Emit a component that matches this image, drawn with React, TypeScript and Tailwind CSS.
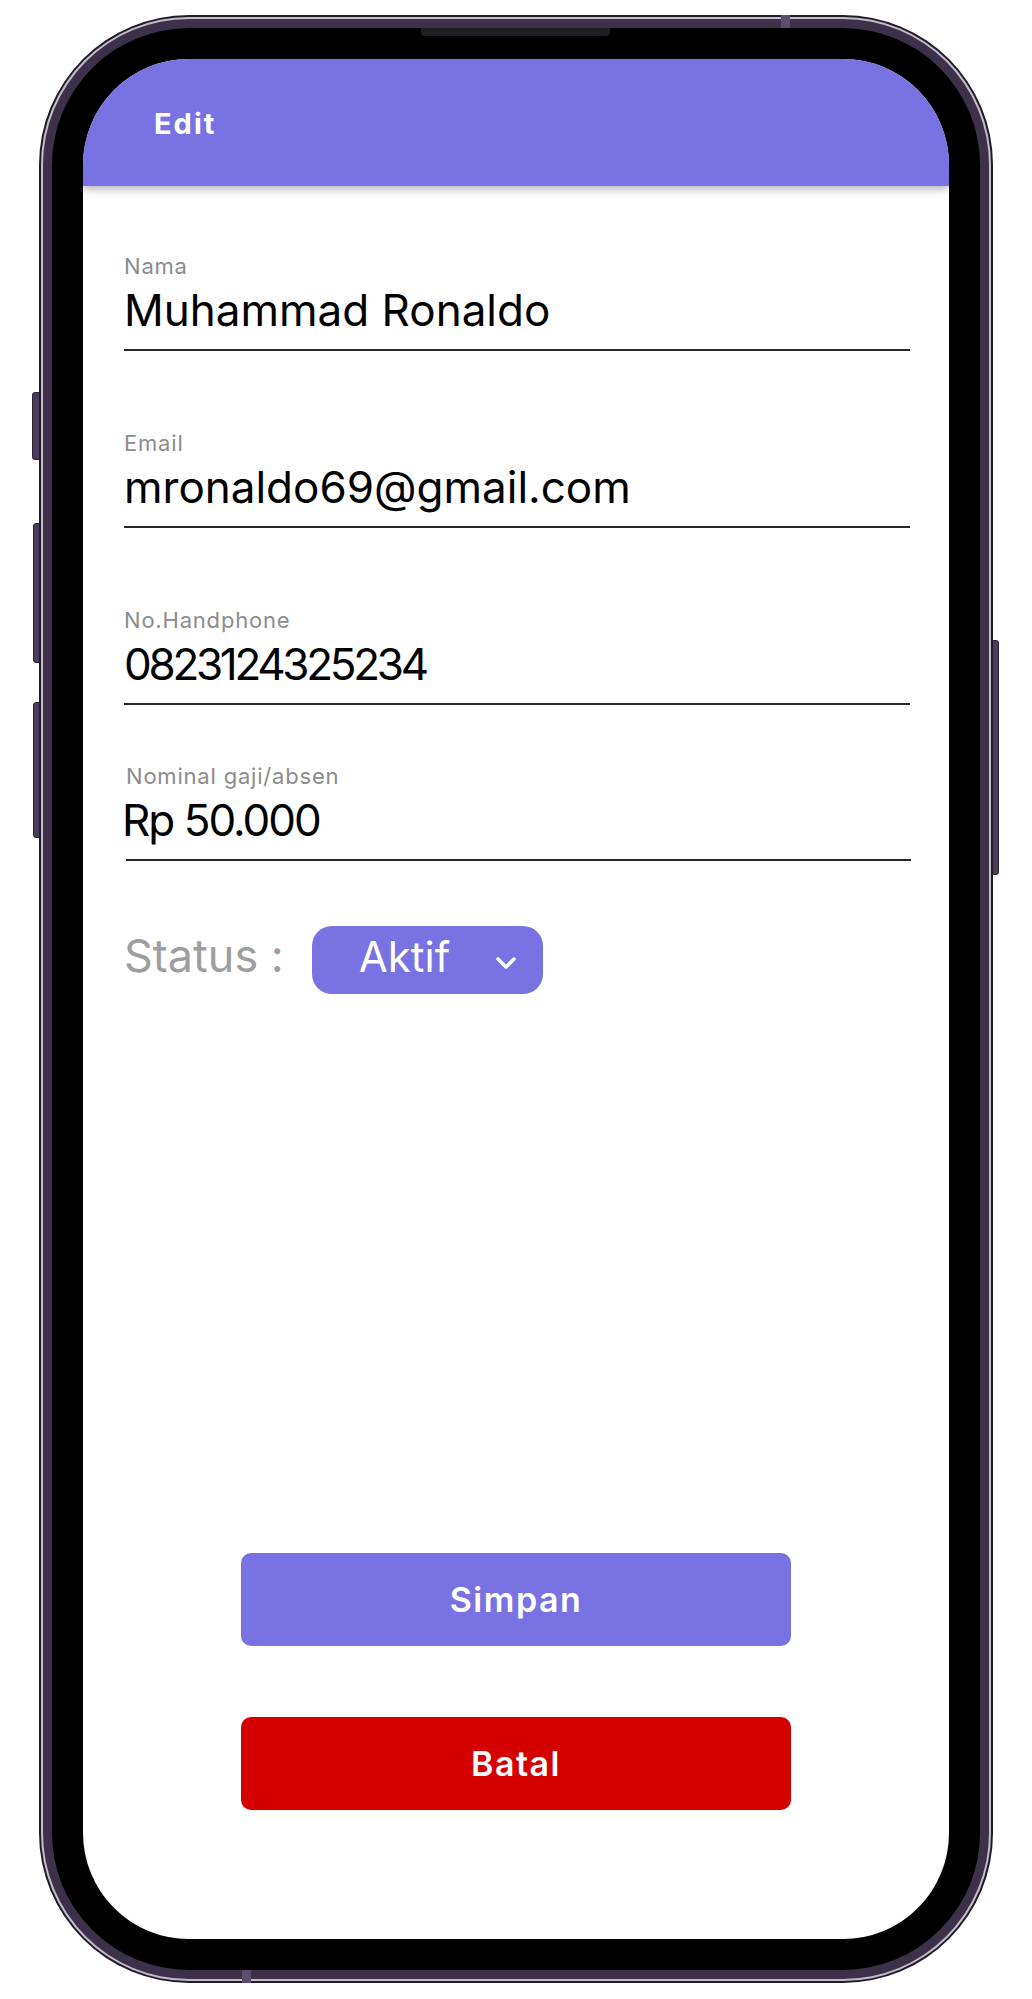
import React from "react";

const font = { fontFamily: "Inter, 'Noto Sans', sans-serif" };

type FieldProps = {
  label: string;
  value: string;
  valueClass?: string;
  shift?: boolean;
};

const Field = ({ label, value, valueClass = "", shift = false }: FieldProps) => (
  <div className={shift ? "ml-[2px] -mr-[1px]" : ""}>
    <div className="text-[22px] leading-[24px] tracking-[0.8px] text-[#8c8c8c]">
      {label}
    </div>
    <div
      className={`mt-[8px] text-[44px] leading-[48px] text-black whitespace-nowrap ${valueClass}`}
    >
      {value}
    </div>
    <div className="mt-[15px] h-[2px] bg-[#262626]" />
  </div>
);

const App = () => {
  return (
    <div className="w-[1032px] h-[1999px] bg-white pt-[15px] pl-[39px]" style={font}>
      {/* phone */}
      <div className="relative w-[954px] h-[1968px]">
        {/* side buttons */}
        <div className="absolute left-[-7px] top-[377px] w-[12px] h-[68px] rounded-[3px] border border-[#2a2236] bg-[#4a3d5c]" />
        <div className="absolute left-[-6px] top-[508px] w-[12px] h-[140px] rounded-[3px] border border-[#2a2236] bg-[#4a3d5c]" />
        <div className="absolute left-[-6px] top-[687px] w-[12px] h-[136px] rounded-[3px] border border-[#2a2236] bg-[#4a3d5c]" />
        <div className="absolute left-[948px] top-[625px] w-[12px] h-[235px] rounded-[3px] border border-[#2a2236] bg-[#4a3d5c]" />

        <div className="relative z-10 h-full rounded-[150px] bg-[#221a2b] p-[2px]">
          <div className="h-full rounded-[148px] bg-[#c4bdc5] p-[2px]">
            <div className="h-full rounded-[146px] bg-[#3d3149] p-[9px]">
              <div className="h-full rounded-[137px] bg-black p-[31px]">
                {/* screen */}
                <div className="h-full rounded-[106px] bg-white overflow-hidden flex flex-col">
                  <div className="relative z-10 h-[127px] shrink-0 bg-[#7872e3] flex items-center pl-[71px] pt-[3px] shadow-[0_3px_8px_rgba(0,0,0,0.3)]">
                    <span className="text-white text-[29px] font-bold tracking-[2px]">Edit</span>
                  </div>

                  <div className="pl-[41px] pr-[39px] pt-[68px]">
                    <div className="flex flex-col gap-[80px]">
                      <Field label="Nama" value="Muhammad Ronaldo" />
                      <Field label="Email" value="mronaldo69@gmail.com" />
                      <Field
                        label="No.Handphone"
                        value="0823124325234"
                        valueClass="tracking-[-3.3px]"
                      />
                    </div>
                    <div className="mt-[59px]">
                      <Field
                        label="Nominal gaji/absen"
                        value="Rp 50.000"
                        valueClass="-ml-[4px] tracking-[-2px]"
                        shift
                      />
                    </div>

                    {/* status */}
                    <div className="mt-[65px] flex items-start">
                      <span className="mt-[4px] text-[45px] leading-[52px] text-[#9e9e9e]">
                        Status :
                      </span>
                      <button className="ml-[28px] h-[68px] rounded-[20px] bg-[#7872e3] flex items-center pl-[47px] pr-[26px] pb-[7px]">
                        <span className="text-white text-[42px] leading-[48px]">Aktif</span>
                        <svg
                          className="ml-[45px] mt-[12px]"
                          width="22"
                          height="14"
                          viewBox="0 0 22 14"
                          fill="none"
                        >
                          <path
                            d="M3 3 L11 11 L19 3"
                            stroke="white"
                            strokeWidth="3.5"
                            strokeLinecap="round"
                            strokeLinejoin="round"
                          />
                        </svg>
                      </button>
                    </div>
                  </div>

                  {/* buttons */}
                  <div className="flex flex-col items-center mt-[559px]">
                    <button className="w-[550px] h-[93px] rounded-[10px] bg-[#7872e3] text-white text-[34px] font-semibold tracking-[1.5px]">
                      Simpan
                    </button>
                    <button className="mt-[71px] w-[550px] h-[93px] rounded-[10px] bg-[#d40000] text-white text-[34px] font-semibold tracking-[1.5px]">
                      Batal
                    </button>
                  </div>
                </div>
              </div>
            </div>
          </div>
        </div>

        {/* speaker + antenna lines */}
        <div className="absolute z-20 left-[382px] top-[13px] w-[189px] h-[8px] rounded-b-[4px] bg-[#1f1f23]" />
        <div className="absolute z-20 left-[742px] top-[0px] w-[9px] h-[13px] bg-[#5a4d6e]" />
        <div className="absolute z-20 left-[203px] top-[1955px] w-[9px] h-[13px] bg-[#5a4d6e]" />
      </div>
    </div>
  );
};

export default App;
